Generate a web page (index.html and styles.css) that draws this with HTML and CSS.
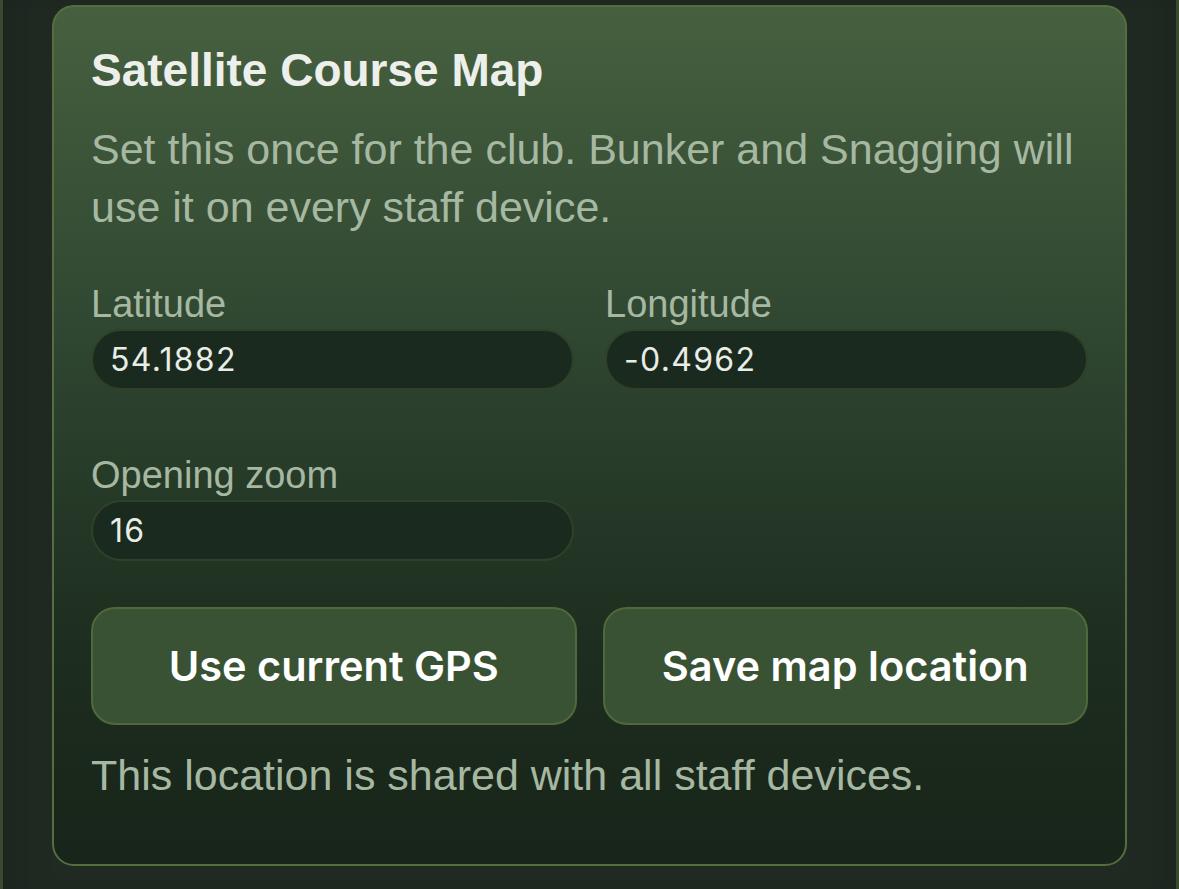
FILE: index.html
```html
<!DOCTYPE html>
<html lang="en">
<head>
    <meta charset="UTF-8">
    <meta name="viewport" content="width=device-width, initial-scale=1.0">
    <title>Satellite Course Map</title>
    <link rel="stylesheet" href="styles.css">
</head>
<body>
    <div class="page">
        <section class="card">
            <h2>Satellite Course Map</h2>
            <p class="hint">Set this once for the club. Bunker and Snagging will use it on every staff device.</p>

            <div class="field-grid">
                <div class="field">
                    <label for="lat">Latitude</label>
                    <input type="text" id="lat" value="54.1882">
                </div>
                <div class="field">
                    <label for="lng">Longitude</label>
                    <input type="text" id="lng" value="-0.4962">
                </div>
                <div class="field">
                    <label for="zoom">Opening zoom</label>
                    <input type="text" id="zoom" value="16">
                </div>
            </div>

            <div class="actions">
                <button type="button" class="btn">Use current GPS</button>
                <button type="button" class="btn">Save map location</button>
            </div>

            <p class="status">This location is shared with all staff devices.</p>
        </section>
    </div>
</body>
</html>
```

FILE: styles.css
```css
html, body {
    margin: 0;
    padding: 0;
}

body {
    background: #202a23;
    font-family: 'Liberation Sans', Arial, sans-serif;
}

.page {
    min-height: 889px;
    box-sizing: border-box;
    border-left: 3px solid #3a4a2c;
    border-right: 3px solid #3a4a2c;
    padding: 5px 49px 0;
    box-shadow: inset 40px 0 40px -30px rgba(0,0,0,0.15), inset -40px 0 40px -30px rgba(0,0,0,0.15);
}

.card {
    border: 2px solid #556e3f;
    border-radius: 22px;
    background: linear-gradient(180deg, #46603f 0%, #2e4530 40%, #1d2d1f 75%, #18251a 100%);
    padding: 35px 37px 60px;
}

h2 {
    margin: 0;
    font-size: 46px;
    line-height: 56px;
    font-weight: 700;
    color: #ecefea;
}

.hint {
    margin: 22px 0 0;
    font-size: 43px;
    line-height: 58px;
    color: #a6b8a2;
}

.field-grid {
    display: grid;
    grid-template-columns: 1fr 1fr;
    column-gap: 31px;
    row-gap: 63px;
    margin-top: 46px;
}

.field label {
    display: block;
    font-size: 38px;
    line-height: 44px;
    color: #a6b8a2;
    margin-bottom: 3px;
}

.field input {
    display: block;
    width: 100%;
    box-sizing: border-box;
    height: 61px;
    padding: 0 17px;
    border: 2px solid #2f4128;
    border-radius: 31px;
    background: #1b2a1e;
    color: #e9ede7;
    font-family: Inter, Roboto, sans-serif;
    font-size: 32px;
    letter-spacing: 1.3px;
    outline: none;
}

.actions {
    display: grid;
    grid-template-columns: 1fr 1fr;
    gap: 26px;
    margin-top: 46px;
}

.btn {
    height: 118px;
    border: 2px solid #4f693d;
    border-radius: 24px;
    background: #3a5234;
    color: #ffffff;
    font-family: Inter, Roboto, sans-serif;
    font-size: 41.5px;
    font-weight: 600;
    cursor: pointer;
}

.status {
    margin: 22px 0 0;
    font-size: 43px;
    line-height: 57px;
    color: #a6b8a2;
}
```
